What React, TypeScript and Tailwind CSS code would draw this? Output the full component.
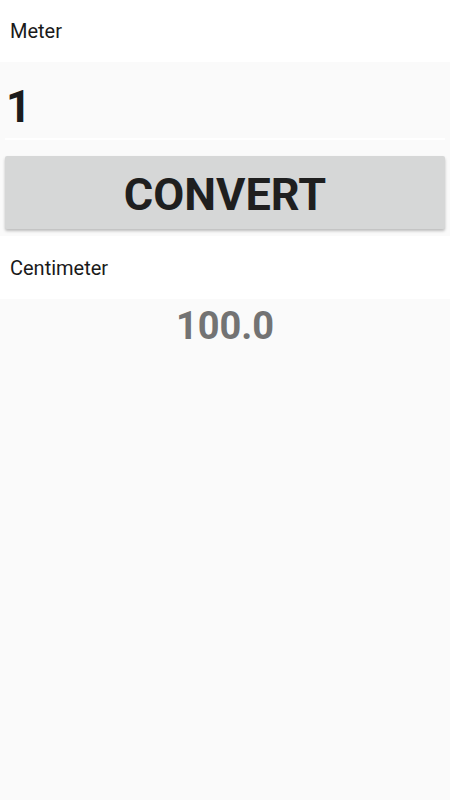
import React from "react";

export default function App() {
  return (
    <div
      className="w-[450px] h-[800px] bg-[#fafafa] flex flex-col"
      style={{ fontFamily: "Roboto, 'Liberation Sans', sans-serif" }}
    >
      <div className="h-[62px] bg-white flex items-center px-[10px] text-[20px] text-[#1a1a1a]">
        Meter
      </div>
      <div className="px-[5px] pt-[14px]">
        <div className="h-[64px] flex items-center pl-[1px] border-b-2 border-white">
          <span className="text-[44px] font-bold text-[#1c1c1c] leading-none">1</span>
        </div>
      </div>
      <div className="px-[5px] pt-[16px] pb-[7px]">
        <button className="w-full h-[73px] pt-[4px] bg-[#d6d7d7] rounded-[2px] shadow-[0_2px_3px_rgba(0,0,0,0.25)] flex items-center justify-center text-[45px] font-bold text-[#1f1f1f] leading-none">
          CONVERT
        </button>
      </div>
      <div className="h-[63px] bg-white flex items-center px-[10px] text-[20px] text-[#1a1a1a]">
        Centimeter
      </div>
      <div className="flex justify-center pt-[8px]">
        <span className="text-[38px] font-bold text-[#737373] leading-[38px]">100.0</span>
      </div>
    </div>
  );
}
